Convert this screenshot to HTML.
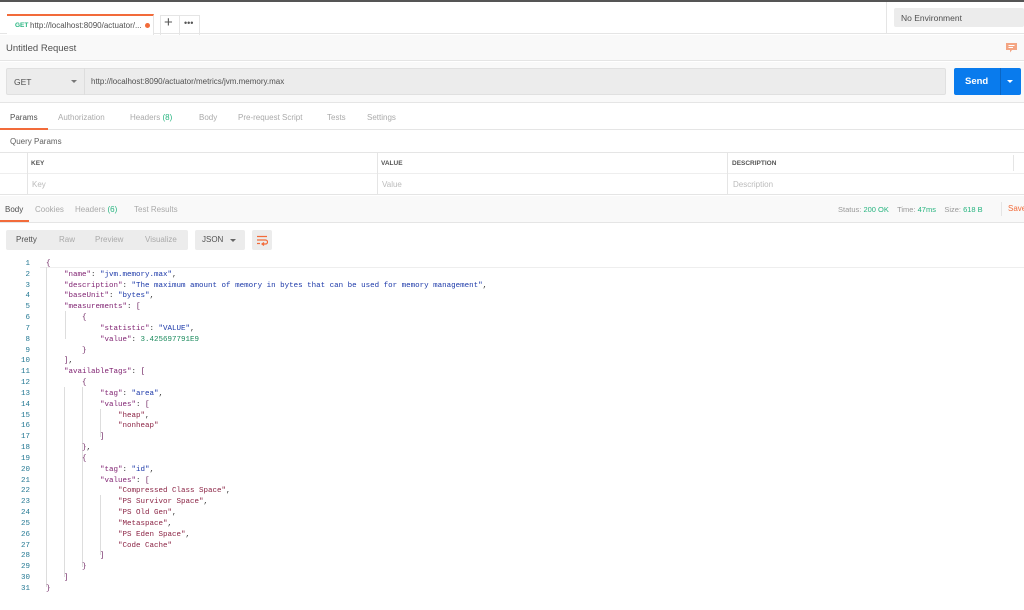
<!DOCTYPE html>
<html><head><meta charset="utf-8"><style>
*{margin:0;padding:0;box-sizing:border-box}
body{width:1024px;height:610px;overflow:hidden;background:#fff;font-family:"Liberation Sans",sans-serif;font-size:8px;color:#505050;position:relative}
.a{position:absolute}
.code{position:absolute;left:0;top:259px;width:1024px;font-family:"Liberation Mono",monospace;font-size:7.5px}
.ln{position:absolute;left:0;width:30px;text-align:right;color:#237893}
.tx{position:absolute;left:46px;white-space:pre;color:#333}
.k{color:#7d1d6e}.s{color:#1a37a8}.n{color:#1a8a5c}.r{color:#8a2243}.b{color:#6b1f5e}
.g{position:absolute;width:1px;background:#ddd}
</style></head><body>
<div class="a" style="left:0;top:0;width:1024px;height:2px;background:#555"></div>
<div class="a" style="left:0;top:2px;width:1024px;height:32px;background:#fff;border-bottom:1px solid #e5e5e5"></div>
<div class="a" style="left:7px;top:14px;width:147px;height:21px;background:#fff;border-top:2px solid #f26b3a;border-right:1px solid #e5e5e5"></div>
<div class="a" style="left:15px;top:22px;font-size:6.5px;color:#26b47f;font-weight:bold">GET</div>
<div class="a" style="left:30px;top:21px;font-size:8px;color:#505050">http://localhost:8090/actuator/...</div>
<div class="a" style="left:145px;top:23px;width:5px;height:5px;border-radius:50%;background:#f26b3a"></div>
<div class="a" style="left:160px;top:15px;width:40px;height:20px;border:1px solid #e5e5e5;border-bottom:none"></div>
<div class="a" style="left:179px;top:15px;width:1px;height:20px;background:#e5e5e5"></div>
<div class="a" style="left:164px;top:14px;font-size:15px;color:#555">+</div>
<div class="a" style="left:184px;top:18px;font-size:9px;color:#555;letter-spacing:0">•••</div>
<div class="a" style="left:886px;top:2px;width:1px;height:32px;background:#e5e5e5"></div>
<div class="a" style="left:894px;top:8px;width:130px;height:19px;background:#ececec;border-radius:2px"></div>
<div class="a" style="left:901px;top:13px;font-size:8.5px;color:#505050">No Environment</div>
<div class="a" style="left:0;top:35px;width:1024px;height:26px;background:#f9f9f9;border-bottom:1px solid #e5e5e5"></div>
<div class="a" style="left:6px;top:43px;font-size:9.5px;color:#505050">Untitled Request</div>
<svg class="a" style="left:1006px;top:43px" width="12" height="10"><path d="M0 0H11V7H6L4 9.5V7H0Z" fill="#f4a583"/><path d="M2.5 2.5H8.5M2.5 4.5H7" stroke="#fff" stroke-width="1"/></svg>
<div class="a" style="left:0;top:62px;width:1024px;height:41px;background:#f9f9f9;border-bottom:1px solid #e5e5e5"></div>
<div class="a" style="left:6px;top:68px;width:940px;height:27px;background:#ececec;border:1px solid #e0e0e0;border-radius:2px"></div>
<div class="a" style="left:84px;top:68px;width:1px;height:27px;background:#ddd"></div>
<div class="a" style="left:14px;top:77px;font-size:8.5px;color:#505050">GET</div>
<div class="a" style="left:71px;top:80px;border:3px solid transparent;border-top:3px solid #777"></div>
<div class="a" style="left:91px;top:77px;font-size:8px;color:#505050">http://localhost:8090/actuator/metrics/jvm.memory.max</div>
<div class="a" style="left:954px;top:68px;width:67px;height:27px;background:#097bed;border-radius:2px"></div>
<div class="a" style="left:1000px;top:68px;width:1px;height:27px;background:#0a66c4"></div>
<div class="a" style="left:965px;top:76px;font-size:9.5px;color:#fff;font-weight:bold">Send</div>
<div class="a" style="left:1007px;top:80px;border:3px solid transparent;border-top:3px solid #fff"></div>
<div class="a" style="left:0;top:104px;width:1024px;height:26px;background:#fff;border-bottom:1px solid #e5e5e5"></div>
<div class="a" style="left:10px;top:113px;font-size:8px;color:#505050">Params</div>
<div class="a" style="left:0;top:128px;width:48px;height:2px;background:#f26b3a"></div>
<div class="a" style="left:58px;top:113px;font-size:8px;color:#aaa">Authorization</div>
<div class="a" style="left:130px;top:113px;font-size:8px;color:#aaa">Headers <span style="color:#26b47f">(8)</span></div>
<div class="a" style="left:199px;top:113px;font-size:8px;color:#aaa">Body</div>
<div class="a" style="left:238px;top:113px;font-size:8px;color:#aaa">Pre-request Script</div>
<div class="a" style="left:327px;top:113px;font-size:8px;color:#aaa">Tests</div>
<div class="a" style="left:367px;top:113px;font-size:8px;color:#aaa">Settings</div>
<div class="a" style="left:10px;top:137px;font-size:8px;color:#606060">Query Params</div>
<div class="a" style="left:0;top:152px;width:1024px;height:43px;border-top:1px solid #e5e5e5;border-bottom:1px solid #e5e5e5"></div>
<div class="a" style="left:0;top:173px;width:1024px;height:1px;background:#eee"></div>
<div class="a" style="left:27px;top:152px;width:1px;height:43px;background:#e5e5e5"></div>
<div class="a" style="left:377px;top:152px;width:1px;height:43px;background:#e5e5e5"></div>
<div class="a" style="left:727px;top:152px;width:1px;height:43px;background:#e5e5e5"></div>
<div class="a" style="left:1013px;top:155px;width:1px;height:16px;background:#e5e5e5"></div>
<div class="a" style="left:31px;top:160px;font-size:6.5px;font-weight:bold;color:#555">KEY</div>
<div class="a" style="left:381px;top:160px;font-size:6.5px;font-weight:bold;color:#555">VALUE</div>
<div class="a" style="left:732px;top:160px;font-size:6.5px;font-weight:bold;color:#555">DESCRIPTION</div>
<div class="a" style="left:32px;top:180px;font-size:8px;color:#bbb">Key</div>
<div class="a" style="left:382px;top:180px;font-size:8px;color:#bbb">Value</div>
<div class="a" style="left:733px;top:180px;font-size:8px;color:#bbb">Description</div>
<div class="a" style="left:0;top:196px;width:1024px;height:27px;background:#f9f9f9;border-bottom:1px solid #e5e5e5"></div>
<div class="a" style="left:5px;top:205px;font-size:8px;color:#505050">Body</div>
<div class="a" style="left:0;top:220px;width:29px;height:2px;background:#f26b3a"></div>
<div class="a" style="left:35px;top:205px;font-size:8px;color:#aaa">Cookies</div>
<div class="a" style="left:75px;top:205px;font-size:8px;color:#aaa">Headers <span style="color:#26b47f">(6)</span></div>
<div class="a" style="left:134px;top:205px;font-size:8px;color:#aaa">Test Results</div>
<div class="a" style="left:838px;top:205px;font-size:7.5px;color:#999">Status: <span style="color:#26b47f">200 OK</span>&nbsp;&nbsp;&nbsp; Time: <span style="color:#26b47f">47ms</span>&nbsp;&nbsp;&nbsp; Size: <span style="color:#26b47f">618 B</span></div>
<div class="a" style="left:1001px;top:202px;width:1px;height:14px;background:#e5e5e5"></div>
<div class="a" style="left:1008px;top:204px;font-size:8px;color:#f26b3a">Save</div>
<div class="a" style="left:6px;top:230px;width:182px;height:20px;background:#ececec;border-radius:2px"></div>
<div class="a" style="left:16px;top:235px;font-size:8px;color:#505050">Pretty</div>
<div class="a" style="left:59px;top:235px;font-size:8px;color:#aaa">Raw</div>
<div class="a" style="left:95px;top:235px;font-size:8px;color:#aaa">Preview</div>
<div class="a" style="left:145px;top:235px;font-size:8px;color:#aaa">Visualize</div>
<div class="a" style="left:195px;top:230px;width:50px;height:20px;background:#ececec;border-radius:2px"></div>
<div class="a" style="left:202px;top:235px;font-size:8px;color:#505050">JSON</div>
<div class="a" style="left:230px;top:239px;border:3px solid transparent;border-top:3px solid #666"></div>
<div class="a" style="left:252px;top:230px;width:20px;height:20px;background:#ececec;border-radius:2px"></div>
<svg class="a" style="left:256px;top:235px" width="12" height="11"><path d="M1 1.5H11M1 5H9.5a2 2 0 0 1 0 4H6M8 7.5L6 9 8 10.5M1 8.5H4" stroke="#f26b3a" stroke-width="1.2" fill="none"/></svg>
<div class="a" style="left:40px;top:267px;width:984px;height:1px;background:#eee"></div>
<div class="code">
<div class="g" style="left:65px;top:52px;height:28px"></div>
<div class="g" style="left:82px;top:128px;height:180px"></div>
<div class="g" style="left:100px;top:150px;height:28px"></div>
<div class="g" style="left:100px;top:236px;height:60px"></div>
<div class="g" style="left:46px;top:8px;height:320px"></div>
<div class="g" style="left:64px;top:128px;height:190px"></div>
</div>
<div class="code" id="c"></div>
<script>
var L=[
'<span class="b">{</span>',
'    <span class="k">"name"</span>: <span class="s">"jvm.memory.max"</span>,',
'    <span class="k">"description"</span>: <span class="s">"The maximum amount of memory in bytes that can be used for memory management"</span>,',
'    <span class="k">"baseUnit"</span>: <span class="s">"bytes"</span>,',
'    <span class="k">"measurements"</span>: <span class="b">[</span>',
'        <span class="b">{</span>',
'            <span class="k">"statistic"</span>: <span class="s">"VALUE"</span>,',
'            <span class="k">"value"</span>: <span class="n">3.425697791E9</span>',
'        <span class="b">}</span>',
'    <span class="b">]</span>,',
'    <span class="k">"availableTags"</span>: <span class="b">[</span>',
'        <span class="b">{</span>',
'            <span class="k">"tag"</span>: <span class="s">"area"</span>,',
'            <span class="k">"values"</span>: <span class="b">[</span>',
'                <span class="r">"heap"</span>,',
'                <span class="r">"nonheap"</span>',
'            <span class="b">]</span>',
'        <span class="b">}</span>,',
'        <span class="b">{</span>',
'            <span class="k">"tag"</span>: <span class="s">"id"</span>,',
'            <span class="k">"values"</span>: <span class="b">[</span>',
'                <span class="r">"Compressed Class Space"</span>,',
'                <span class="r">"PS Survivor Space"</span>,',
'                <span class="r">"PS Old Gen"</span>,',
'                <span class="r">"Metaspace"</span>,',
'                <span class="r">"PS Eden Space"</span>,',
'                <span class="r">"Code Cache"</span>',
'            <span class="b">]</span>',
'        <span class="b">}</span>',
'    <span class="b">]</span>',
'<span class="b">}</span>'];
var h='';for(var i=0;i<L.length;i++){var t=(i*10.83+1).toFixed(2);h+='<div class="ln" style="top:'+t+'px">'+(i+1)+'</div><div class="tx" style="top:'+t+'px">'+L[i]+'</div>';}
document.getElementById('c').innerHTML=h;
</script>
</body></html>
